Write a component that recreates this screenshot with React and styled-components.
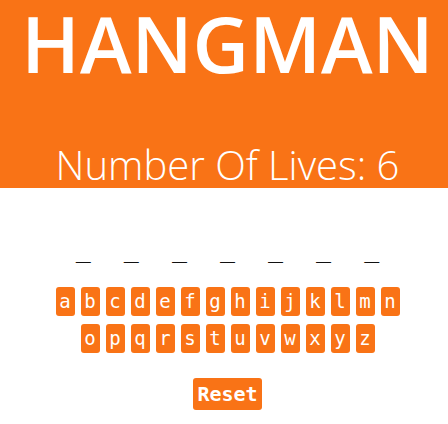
import React, { useState } from 'react';
import styled, { createGlobalStyle } from 'styled-components';

const GlobalStyle = createGlobalStyle`
  body {
    margin: 0;
    background: #fff;
    font-family: "Open Sans", "DejaVu Sans", sans-serif;
  }
`;

const Page = styled.div`
  padding-left: 7px;
  display: flex;
  flex-direction: column;
  align-items: center;
`;

const Header = styled.header`
  margin-left: -7px;
  padding-left: 7px;
  align-self: stretch;
  height: 188px;
  background: #f97316;
  color: #fff;
  display: flex;
  flex-direction: column;
  align-items: center;
`;

const Title = styled.h1`
  margin: 0;
  margin-top: 3px;
  font-size: 78px;
  line-height: 80px;
  font-weight: 600;
`;

const Lives = styled.p`
  margin: 0;
  margin-top: 58px;
  font-size: 40px;
  line-height: 48px;
  font-weight: 300;
`;

const Word = styled.div`
  display: flex;
  gap: 33px;
  margin-top: 46px;
  height: 53px;
`;

const Blank = styled.span`
  font-family: "DejaVu Sans Mono", monospace;
  font-size: 25px;
  line-height: 30px;
  color: #111;
`;

const Keys = styled.div`
  display: flex;
  justify-content: center;
  gap: 6px;
  margin-top: ${(p) => p.$top}px;
`;

const Key = styled.button`
  appearance: none;
  width: 19px;
  height: 29px;
  padding: 0;
  border: none;
  border-radius: 3px;
  background: #f97316;
  color: #fff;
  font-family: "DejaVu Sans Mono", monospace;
  font-size: 19px;
  font-weight: normal;
  line-height: 29px;
  text-align: center;
  cursor: pointer;
`;

const Reset = styled.button`
  appearance: none;
  margin-top: 25px;
  width: 69px;
  height: 32px;
  padding: 0;
  border: none;
  border-radius: 3px;
  background: #f97316;
  color: #fff;
  font-family: "DejaVu Sans Mono", monospace;
  font-size: 20px;
  font-weight: bold;
  cursor: pointer;
`;

const rowOne = 'abcdefghijklmn'.split('');
const rowTwo = 'opqrstuvwxyz'.split('');
const word = 'HANGMAN';

export default function App() {
  const [guessed, setGuessed] = useState([]);
  const lives = 6 - guessed.filter((l) => !word.toLowerCase().includes(l)).length;

  const guess = (l) => setGuessed((g) => (g.includes(l) ? g : [...g, l]));

  return (
    <>
      <GlobalStyle />
      <Page>
        <Header>
          <Title>HANGMAN</Title>
          <Lives>Number Of Lives: {lives}</Lives>
        </Header>
        <Word>
          {word.split('').map((c, i) => (
            <Blank key={i}>{guessed.includes(c.toLowerCase()) ? c : '_'}</Blank>
          ))}
        </Word>
        <Keys $top={0}>
          {rowOne.map((l) => (
            <Key key={l} onClick={() => guess(l)}>{l}</Key>
          ))}
        </Keys>
        <Keys $top={8}>
          {rowTwo.map((l) => (
            <Key key={l} onClick={() => guess(l)}>{l}</Key>
          ))}
        </Keys>
        <Reset onClick={() => setGuessed([])}>Reset</Reset>
      </Page>
    </>
  );
}
